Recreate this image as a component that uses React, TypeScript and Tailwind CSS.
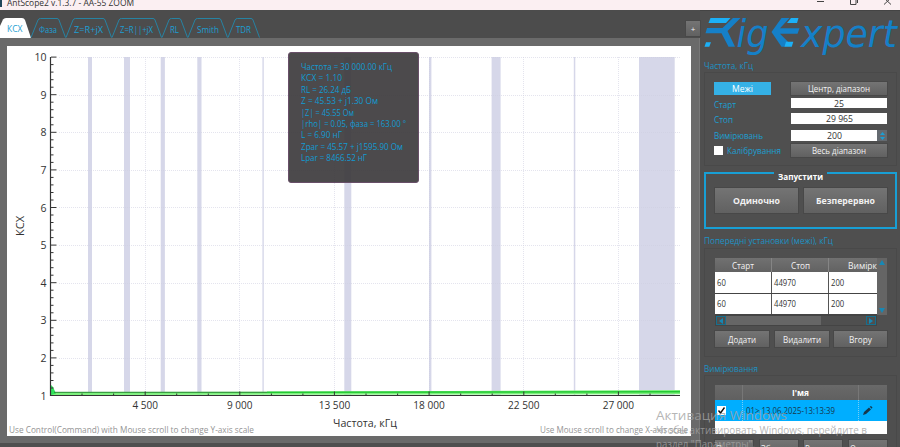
import React from "react"

const tabs = [
  { label: "Фаза", width: 34, text: 18 },
  { label: "Z=R+jX", width: 45, text: 29 },
  { label: "Z=R||+jX", width: 49, text: 33 },
  { label: "RL", width: 25, text: 9 },
  { label: "Smith", width: 39, text: 22 },
  { label: "TDR", width: 31, text: 15 },
]

// [x, width] of the amateur bands, in chart pixels
const bands = [[81, 4], [117, 6], [153.7, 4.2], [190.3, 4.2], [255.4, 1.4], [337.3, 7], [422, 2.4], [484.6, 9], [566.8, 1.5], [632, 35.7]]

const xLabels = ["4 500", "9 000", "13 500", "18 000", "22 500", "27 000"]
const axisX = 43.5
const axisY = 349.5
const stepX = 94.65
const stepY = 37.6

const readings = [
  { text: "Частота = 30 000.00 кГц", width: 91 },
  { text: "КСХ = 1.10", width: 41 },
  { text: "RL = 26.24 дБ", width: 50 },
  { text: "Z = 45.53 + j1.30 Ом", width: 77 },
  { text: "|Z| = 45.55 Ом", width: 53 },
  { text: "|rho| = 0.05, фаза = 163.00 °", width: 105 },
  { text: "L = 6.90 нГ", width: 41 },
  { text: "Zpar = 45.57 + j1595.90 Ом", width: 102 },
  { text: "Lpar = 8466.52 нГ", width: 66 },
]

const presets = [["60", "44970", "200"], ["60", "44970", "200"]]

function Label({ text, width, size = 9, height = 11, className = "" }: { text: string, width: number, size?: number, height?: number, className?: string }) {
  return (
    <svg width={width} height={height} className={`block shrink-0 overflow-visible fill-current ${className}`}>
      <text x="0" y={height / 2 + size * 0.35} fontSize={size} textLength={width} lengthAdjust="spacingAndGlyphs">{text}</text>
    </svg>
  )
}

function Button({ className = "", children }: { className?: string, children: React.ReactNode }) {
  return (
    <button className={`flex items-center justify-center overflow-hidden bg-linear-to-b from-[#747474] to-[#616161] text-[#f2f2f2] shadow-[0_0_0_1px_#484848] ${className}`}>
      {children}
    </button>
  )
}

function Logo() {
  return (
    <svg width="196" height="44" viewBox="704 14 196 44" className="block overflow-visible">
      <g fill="#1580c8">
        <path d="M733 18H740.5L727.5 31L735 46.7H728.5L721.5 33.3H705.5L707 28H722.5Z" />
        <path d="M781.5 18H789.5L780 28.3H799.5L797.5 33.7H780L788 41.7L785 46.7H781.5L771.5 32Z" />
      </g>
      <g fill="#1cb0f6">
        <path d="M710.5 18H730.5L726 23H708.5Z" />
        <path d="M706 42.3H711L709.3 46.7H704.5Z" />
        <path d="M791 18H798.5L797 23H787Z" />
        <path d="M786 41.7H793.3L791.8 46.7H784.5Z" />
      </g>
      <g fill="#1580c8" fontFamily="DejaVu Sans, sans-serif" fontStyle="italic" fontSize="37">
        <text x="736.5" y="46.5" textLength="32" lengthAdjust="spacingAndGlyphs">ig</text>
        <text x="801" y="46.5" textLength="96" lengthAdjust="spacingAndGlyphs">xpert</text>
      </g>
    </svg>
  )
}

function Chart() {
  return (
    <svg width="684" height="390" className="block bg-white" fill="#333">
      {bands.map(([x, w]) => <rect key={x} x={x} y="11" width={w} height="338" fill="#d6d7e9" />)}
      <g stroke="#cdcde0" strokeOpacity="0.55" strokeDasharray="1 1">
        {Array.from({ length: 9 }, (_, i) => <path key={i} d={`M52 ${Math.round(11 + i * stepY) + 0.5}H673`} />)}
        {xLabels.map((label, i) => <path key={label} d={`M${Math.round(axisX + (i + 1) * stepX - 0.5) + 0.5} 11V349`} />)}
      </g>
      <path d="M44 346L260 345.8L673 344V348.3L44 349Z" fill="#7df07d" />
      <path d="M44 339L46 341L49 347.5L44 349Z" fill="#2fe35a" />
      <path d="M47 346.3H260" stroke="#2a8a35" strokeWidth="1" fill="none" />
      <path d="M260 346.3L673 345.7" stroke="#22c933" strokeWidth="1.6" fill="none" />
      <g stroke="#333" strokeWidth="1">
        <path d={`M${axisX} 11V350`} strokeWidth="1.2" />
        <path d={`M43 ${axisY}H673`} strokeWidth="1.1" />
        {Array.from({ length: 46 }, (_, i) => (
          <path key={i} d={`M44 ${(axisY - i * stepY / 5).toFixed(1)}h${i % 5 === 0 ? 5.5 : 2.5}`} />
        ))}
        {Array.from({ length: 19 }, (_, i) => (
          <path key={i} d={`M${(axisX + (i + 1) * stepX / 3).toFixed(1)} 349v${i % 3 === 2 ? -3.5 : -1.5}`} />
        ))}
      </g>
      <g fontSize="10.5" textAnchor="end">
        {Array.from({ length: 10 }, (_, i) => (
          <text key={i} x="39.5" y={axisY + 4 - i * stepY}>{i + 1}</text>
        ))}
      </g>
      <g fontSize="10.500" textAnchor="middle">
        {xLabels.map((label, i) => (
          <text key={label} x={axisX + (i + 1) * stepX} y="363" textLength={label.length === 5 ? 25.5 : 31.5} lengthAdjust="spacingAndGlyphs">{label}</text>
        ))}
      </g>
      <text x="326" y="380.5" fontSize="11" textLength="64" lengthAdjust="spacingAndGlyphs">Частота, кГц</text>
      <text transform="translate(17 190) rotate(-90)" fontSize="11.5" textLength="20" lengthAdjust="spacingAndGlyphs">КСХ</text>
      <g fontSize="8.8" fill="#959595">
        <text x="2" y="386.7" textLength="245" lengthAdjust="spacingAndGlyphs">Use Control(Command) with Mouse scroll to change Y-axis scale</text>
        <text x="533" y="386.7" textLength="148" lengthAdjust="spacingAndGlyphs">Use Mouse scroll to change X-axis scale</text>
      </g>
    </svg>
  )
}

function TitleBar() {
  return (
    <header className="flex h-[10px] shrink-0 justify-between overflow-hidden bg-[#fbeff2] text-[#333]">
      <div className="flex">
        <div className="h-[7px] w-[2px] bg-[#20475a]" />
        <Label text="AntScope2 v.1.3.7 - AA-55 ZOOM" width={127} size={9.8} className="-mt-[3px] ml-[5px]" />
      </div>
      <svg width="84" height="10" fill="none" stroke="#444" strokeWidth="1">
        <path d="M1 1.5H8M34.5 -1V4.5H40V-1M36 -1H41.5V3M68 4.5L75 -2M75 4.5L68 -2" />
      </svg>
    </header>
  )
}

function TabStrip() {
  return (
    <nav className="flex h-[28px] items-end bg-[#4c4c4c] text-[#1d9fd3]">
      <svg width="31" height="20" className="shrink-0">
        <path d="M0 20V8L3 1.5Q4 0 6 0H22Q24 0 25 2L31 20Z" fill="#fff" />
        <text x="7" y="13.5" fontSize="9" textLength="15.5" lengthAdjust="spacingAndGlyphs" fill="#1d9fd3">КСХ</text>
      </svg>
      {tabs.map(({ label, width, text }) => (
        <div key={label} className="relative mr-px flex h-[20px] shrink-0 items-center justify-center" style={{ width }}>
          <svg width={width} height="20" className="absolute inset-0 overflow-visible" fill="none" stroke="#2389ad">
            <path d={`M0 19.5L7 2Q7.7 .5 9.5 .5H${width - 8}Q${width - 6.5} .5 ${width - 6} 2L${width + 0.5} 19.5`} strokeWidth="0.9" />
          </svg>
          <Label text={label} width={text} size={8.8} className="mt-[2px]" />
        </div>
      ))}
      <Button className="mb-[2px] ml-auto h-[15px] w-[14px] text-[8px]">+</Button>
    </nav>
  )
}

function Readout() {
  return (
    <div className="absolute top-[52px] left-[288px] flex h-[131px] w-[131px] flex-col rounded-[3px] border border-[#684f68] bg-[#3e3c3e]/93 pt-[8px] pl-[12px] text-[#129bd2]">
      {readings.map(({ text, width }) => (
        <Label key={text} text={text} width={width} size={8.9} height={11.4} />
      ))}
    </div>
  )
}

function FrequencyGroup() {
  return (
    <section className="flex flex-col">
      <Label text="Частота, кГц" width={49} />
      <div className="mt-px mr-[3px] flex h-[94px] justify-between border border-[#494949] pt-[9px] pr-[9px] pl-[9px] text-[#1d9fd3]">
        <div className="flex flex-col">
          <div className="flex h-[13px] w-[57px] items-center justify-center bg-[#35b1e6] text-white">
            <Label text="Межі" width={21} />
          </div>
          <Label text="Старт" width={22} className="mt-[4px]" />
          <Label text="Стоп" width={19} className="mt-[4px]" />
          <Label text="Вимірювань" width={49} className="mt-[5px]" />
          <div className="mt-[4px] flex items-center gap-[4px]">
            <div className="h-[9px] w-[9px] bg-white" />
            <Label text="Калібрування" width={54} />
          </div>
        </div>
        <div className="flex w-[96px] flex-col text-[#333]">
          <Button className="h-[13px]"><Label text="Центр, діапазон" width={62} /></Button>
          <div className="mt-[3px] flex h-[10px] items-center justify-center bg-white"><Label text="25" width={10} /></div>
          <div className="mt-[5px] flex h-[11px] items-center justify-center bg-white"><Label text="29 965" width={27} /></div>
          <div className="mt-[6px] flex h-[11px]">
            <div className="flex flex-1 items-center justify-center bg-white"><Label text="200" width={15} /></div>
            <div className="flex w-[10px] items-center justify-center bg-[#646a70]">
              <svg width="5" height="8" fill="#1a9fd5"><path d="M0 3L2.5 0L5 3ZM0 5L2.5 8L5 5Z" /></svg>
            </div>
          </div>
          <Button className="mt-[3px] h-[13px]"><Label text="Весь діапазон" width={54} /></Button>
        </div>
      </div>
    </section>
  )
}

function RunGroup() {
  return (
    <section className="mt-[6px] mr-[3px] h-[57px] border-2 border-[#189fd5] text-white">
      <div className="mx-auto -mt-[3px] flex h-[12px] w-[53px] justify-center bg-[#4f4f4f]">
        <Label text="Запустити" width={45} className="font-bold" />
      </div>
      <div className="mt-[5px] flex justify-center gap-[6px]">
        <Button className="h-[25px] w-[83px]"><Label text="Одиночно" width={47} size={9.5} className="font-bold" /></Button>
        <Button className="h-[25px] w-[83px]"><Label text="Безперервно" width={59} size={9.5} className="font-bold" /></Button>
      </div>
    </section>
  )
}

function Arrow({ d }: { d: string }) {
  return <svg width="6" height="6" fill="#1788b5"><path d={d} /></svg>
}

function PresetsGroup() {
  return (
    <section className="mt-[6px]">
      <Label text="Попередні установки (межі), кГц" width={129} />
      <div className="mt-[2px] mr-[3px] h-[109px] border border-[#494949] pr-[9px] pl-[10px] pt-[9px]">
        <div className="flex h-[57px]">
          <div className="w-[162px] overflow-hidden bg-white text-[#333]">
            <div className="flex h-[14px] bg-linear-to-b from-[#717171] to-[#626262] text-[#f2f2f2]">
              <div className="flex w-[57px] shrink-0 items-center justify-center border-r border-[#858585]"><Label text="Старт" width={22} /></div>
              <div className="flex w-[57px] shrink-0 items-center justify-center border-r border-[#858585]"><Label text="Стоп" width={19} /></div>
              <div className="flex flex-1 items-center justify-end overflow-hidden"><Label text="Вимірк" width={29} /></div>
            </div>
            {presets.map((row, i) => (
              <div key={i} className="flex h-[21.5px] border-b border-[#444]">
                {row.map((cell, j) => (
                  <div key={j} className={`flex w-[57px] shrink-0 items-center pl-[2px] ${j < 2 ? "border-r border-[#555]" : ""}`}>
                    <Label text={cell} width={cell.length * 4.4} size={8.6} />
                  </div>
                ))}
              </div>
            ))}
          </div>
          <div className="flex w-[10px] flex-col items-center justify-between bg-[#656565] py-[2px]">
            <Arrow d="M0 5L3 0L6 5Z" />
            <Arrow d="M0 1L3 6L6 1Z" />
          </div>
        </div>
        <div className="flex h-[11px] w-[162px] items-center justify-between border border-[#444]">
          <div className="flex h-full w-[10px] items-center justify-center border border-[#16708f]"><Arrow d="M5 0L1 3L5 6Z" /></div>
          <div className="mr-auto h-full w-[95px] bg-[#666]" />
          <div className="flex h-full w-[10px] items-center justify-center border border-[#16708f]"><Arrow d="M1 0L5 3L1 6Z" /></div>
        </div>
        <div className="mt-[5px] flex justify-between">
          <Button className="h-[16px] w-[54px]"><Label text="Додати" width={28} /></Button>
          <Button className="h-[16px] w-[54px]"><Label text="Видалити" width={38} /></Button>
          <Button className="h-[16px] w-[53px]"><Label text="Вгору" width={23} /></Button>
        </div>
      </div>
    </section>
  )
}

function MeasurementsGroup() {
  return (
    <section className="mt-[6px]">
      <Label text="Вимірювання" width={54} />
      <div className="mt-px mr-[3px] border border-[#494949] pr-[9px] pl-[10px] pt-[9px]">
        <div className="h-[49px] bg-white">
          <div className="flex h-[15px] bg-linear-to-b from-[#696969] to-[#606060] text-white">
            <div className="w-[28px] border-r border-[#777]" />
            <div className="flex flex-1 items-center justify-center"><Label text="І'мя" width={17} className="font-bold" /></div>
            <div className="w-[29px] border-l border-[#777]" />
          </div>
          <div className="flex h-[21px] bg-[#00aeff] text-[#17384d]">
            <div className="flex w-[28px] items-center border-r border-dotted border-[#78cdf5] pl-[2px]">
              <svg width="9" height="9" className="bg-white"><path d="M1.5 4.5L3.5 7L7.5 1.5" fill="none" stroke="#111" strokeWidth="1.4" /></svg>
            </div>
            <div className="flex flex-1 items-center pl-[3px]"><Label text="01> 13.06.2025-13:13:39" width={89} /></div>
            <div className="flex w-[29px] items-center border-l border-dotted border-[#78cdf5] pl-[4px]">
              <svg width="10" height="10" fill="#17384d"><path d="M0 9L1 6L6 1.5L8 3.5L3 8ZM6.7 .8L8 0L9.5 1.4L8.7 2.8Z" /></svg>
            </div>
          </div>
        </div>
        <div className="mt-[6px] flex justify-between">
          {["Показати", "Зберегти", "Видалити", "Очистити"].map((label) => (
            <Button key={label} className="h-[16px] w-[38px]"><Label text={label} width={36} /></Button>
          ))}
        </div>
      </div>
    </section>
  )
}

export default function App() {
  return (
    <div className="relative flex h-[447px] w-[900px] flex-col overflow-hidden bg-[#4f4f4f] font-['Open_Sans','Noto_Sans',sans-serif]">
      <TitleBar />
      <div className="flex min-h-0 flex-1">
        <main className="flex w-[700px] shrink-0 flex-col">
          <TabStrip />
          <div className="h-[405px] border-r border-[#777] bg-[#6a6a6a] pt-[8px] pl-[7px]">
            <Chart />
          </div>
        </main>
        <aside className="flex min-w-0 flex-1 flex-col border-t border-[#444] pt-[3px] pl-[4px] text-[#1d92c4]">
          <Logo />
          <div className="mt-[2px] flex flex-col">
            <FrequencyGroup />
            <RunGroup />
            <PresetsGroup />
            <MeasurementsGroup />
          </div>
        </aside>
      </div>
      <Readout />
      <div className="pointer-events-none absolute top-[408px] left-[656px] text-[#a2a2a2]/80">
        <Label text="Активация Windows" width={131} size={12.5} height={15} />
        <Label text="Чтобы активировать Windows, перейдите в" width={211} size={10} height={15} />
        <Label text={'раздел "Параметры".'} width={99} size={10} height={12} />
      </div>
    </div>
  )
}
